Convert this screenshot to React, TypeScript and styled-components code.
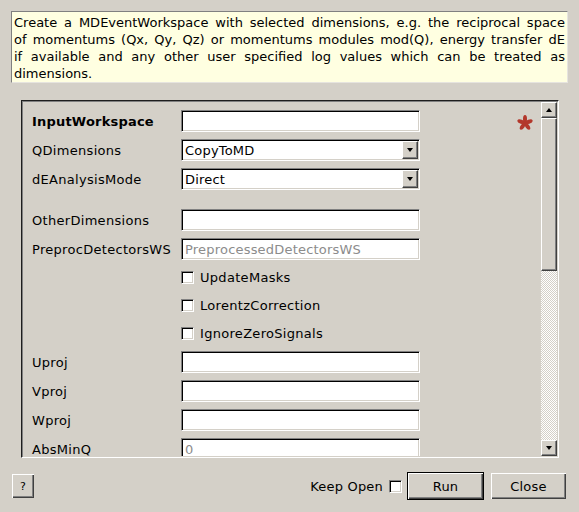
import React from 'react';
import styled, { createGlobalStyle } from 'styled-components';

const Global = createGlobalStyle`
  html, body { margin: 0; padding: 0; background: #d4d0c8; }
  body { font-family: "DejaVu Sans", "Noto Sans", sans-serif; font-size: 13px; color: #000; }
  * { box-sizing: border-box; }
`;

const Dialog = styled.div`
  width: 579px;
  height: 512px;
  display: flex;
  flex-direction: column;
  padding: 11px 11px 0 11px;
  background: #d4d0c8;
  overflow: hidden;
`;

const Description = styled.div`
  height: 72px;
  background: #ffffe1;
  border: 1px solid;
  border-color: #808080 #e6e4df #e6e4df #808080;
  padding: 2px 2px 0 2px;
  line-height: 17px;
`;

const DescLine = styled.div<{ $last?: boolean }>`
  text-align: ${p => (p.$last ? 'left' : 'justify')};
  text-align-last: ${p => (p.$last ? 'left' : 'justify')};
  white-space: normal;
  height: 17px;
  overflow: hidden;
`;

const Frame = styled.div`
  margin: 17px 0 0 10px;
  width: 538px;
  height: 358px;
  display: flex;
  border: 1px solid;
  border-color: #1e1e1e #ffffff #ffffff #1e1e1e;
  padding: 1px;
  box-shadow: inset 1px 1px 0 #808080;
`;

const Viewport = styled.div`
  flex: 1;
  overflow: hidden;
  position: relative;
`;

const Form = styled.div`
  display: flex;
  flex-direction: column;
  gap: 7px;
  padding: 8px 0 0 9px;
`;

const Row = styled.div<{ $h?: number }>`
  display: grid;
  grid-template-columns: 149px 239px 1fr;
  align-items: center;
  height: ${p => p.$h ?? 22}px;
  flex-shrink: 0;
`;

const Spacer = styled.div`
  height: 5px;
  flex-shrink: 0;
`;

const Label = styled.div<{ $bold?: boolean }>`
  font-weight: ${p => (p.$bold ? 'bold' : 'normal')};
  white-space: nowrap;
  letter-spacing: ${p => (p.$bold ? '0.2px' : '0.3px')};
`;

const Field = styled.div<{ $disabled?: boolean }>`
  height: 22px;
  width: 239px;
  background: #ffffff;
  border: 1px solid;
  border-color: #808080 #ffffff #ffffff #808080;
  box-shadow: inset 1px 1px 0 #000000, inset -1px -1px 0 #d4d0c8;
  padding: 0 3px;
  display: flex;
  align-items: center;
  color: ${p => (p.$disabled ? '#8c8c8c' : '#000')};
  white-space: nowrap;
  overflow: hidden;
  letter-spacing: 0.2px;
`;

const Combo = styled(Field)`
  padding: 1px 1px 1px 3px;
  justify-content: space-between;
  align-items: stretch;
`;

const ComboText = styled.span`
  display: flex;
  align-items: center;
`;

const RaisedBox = styled.div`
  background: #d4d0c8;
  border-top: 1px solid #ffffff;
  border-left: 1px solid #ffffff;
  border-right: 1px solid #404040;
  border-bottom: 1px solid #404040;
  box-shadow: inset -1px -1px 0 #808080;
  display: flex;
  align-items: center;
  justify-content: center;
`;

const ComboButton = styled(RaisedBox)`
  width: 16px;
  height: 18px;
`;

const Arrow = styled.span<{ $up?: boolean }>`
  width: 0;
  height: 0;
  border-left: 3.5px solid transparent;
  border-right: 3.5px solid transparent;
  ${p => (p.$up ? 'border-bottom: 4px solid #000;' : 'border-top: 4px solid #000;')}
`;

const CheckCell = styled.label`
  grid-column: 2 / 4;
  display: flex;
  align-items: center;
  gap: 6px;
  letter-spacing: 0.3px;
`;

const CheckBox = styled.span`
  width: 13px;
  height: 13px;
  background: #fff;
  border: 1px solid;
  border-color: #808080 #ffffff #ffffff #808080;
  box-shadow: inset 1px 1px 0 #000, inset -1px -1px 0 #d4d0c8;
  flex-shrink: 0;
`;

const StarCell = styled.div`
  justify-self: end;
  padding-right: 8px;
  display: flex;
  align-items: center;
  margin-top: 2px;
`;

const ScrollBar = styled.div`
  width: 16px;
  display: flex;
  flex-direction: column;
  background-color: #ffffff;
  background-image: repeating-conic-gradient(#d4d0c8 0 25%, #ffffff 0 50%);
  background-size: 2px 2px;
`;

const ScrollButton = styled(RaisedBox)`
  height: 16px;
  flex-shrink: 0;
`;

const Thumb = styled(RaisedBox)`
  height: 153px;
  flex-shrink: 0;
`;

const Trough = styled.div`
  flex: 1;
`;

const BottomBar = styled.div`
  margin-top: 14px;
  height: 28px;
  display: flex;
  align-items: center;
  padding-right: 2px;
  padding-left: 1px;
`;

const Button = styled.button<{ $w: number; $h: number; $default?: boolean }>`
  width: ${p => p.$w}px;
  height: ${p => p.$h}px;
  font-family: "DejaVu Sans", sans-serif;
  font-size: 13px;
  color: #000;
  background: #d4d0c8;
  padding: 0;
  border: ${p => (p.$default ? '1px solid #000' : 'none')};
  box-shadow: inset 1px 1px 0 #ffffff, inset -1px -1px 0 #404040, inset -2px -2px 0 #808080;
  display: flex;
  align-items: center;
  justify-content: center;
  letter-spacing: 0.2px;
`;

const HelpText = styled.span`
  font-size: 11px;
`;

const Grow = styled.div`
  flex: 1;
`;

const KeepOpen = styled.label`
  display: flex;
  align-items: center;
  gap: 6px;
  margin-right: 5px;
  letter-spacing: 0.2px;
`;

const ButtonGap = styled.div`
  width: 7px;
`;

const Star = () => (
  <svg width="16" height="15" viewBox="0 0 16 15">
    {[0, 72, 144, 216, 288].map(a => (
      <ellipse key={a} cx="8" cy="4" rx="2" ry="4" fill="#b3372b" transform={`rotate(${a} 8 8)`} />
    ))}
  </svg>
);

type FieldRow = { label: string; kind: 'text' | 'combo' | 'disabled'; value?: string; bold?: boolean; star?: boolean };

const TextRow = ({ r }: { r: FieldRow }) => (
  <Row>
    <Label $bold={r.bold}>{r.label}</Label>
    {r.kind === 'combo' ? (
      <Combo>
        <ComboText>{r.value}</ComboText>
        <ComboButton>
          <Arrow />
        </ComboButton>
      </Combo>
    ) : (
      <Field $disabled={r.kind === 'disabled'}>{r.value}</Field>
    )}
    {r.star ? (
      <StarCell>
        <Star />
      </StarCell>
    ) : (
      <div />
    )}
  </Row>
);

const CheckRow = ({ label }: { label: string }) => (
  <Row $h={21}>
    <div />
    <CheckCell>
      <CheckBox />
      {label}
    </CheckCell>
  </Row>
);

export default function App() {
  return (
    <>
      <Global />
      <Dialog>
        <Description>
          <DescLine>Create a MDEventWorkspace with selected dimensions, e.g. the reciprocal space</DescLine>
          <DescLine>of momentums (Qx, Qy, Qz) or momentums modules mod(Q), energy transfer dE</DescLine>
          <DescLine>if available and any other user specified log values which can be treated as</DescLine>
          <DescLine $last>dimensions.</DescLine>
        </Description>
        <Frame>
          <Viewport>
            <Form>
              <TextRow r={{ label: 'InputWorkspace', kind: 'text', bold: true, star: true }} />
              <TextRow r={{ label: 'QDimensions', kind: 'combo', value: 'CopyToMD' }} />
              <TextRow r={{ label: 'dEAnalysisMode', kind: 'combo', value: 'Direct' }} />
              <Spacer />
              <TextRow r={{ label: 'OtherDimensions', kind: 'text' }} />
              <TextRow r={{ label: 'PreprocDetectorsWS', kind: 'disabled', value: 'PreprocessedDetectorsWS' }} />
              <CheckRow label="UpdateMasks" />
              <CheckRow label="LorentzCorrection" />
              <CheckRow label="IgnoreZeroSignals" />
              <TextRow r={{ label: 'Uproj', kind: 'text' }} />
              <TextRow r={{ label: 'Vproj', kind: 'text' }} />
              <TextRow r={{ label: 'Wproj', kind: 'text' }} />
              <TextRow r={{ label: 'AbsMinQ', kind: 'disabled', value: '0' }} />
            </Form>
          </Viewport>
          <ScrollBar>
            <ScrollButton>
              <Arrow $up />
            </ScrollButton>
            <Thumb />
            <Trough />
            <ScrollButton>
              <Arrow />
            </ScrollButton>
          </ScrollBar>
        </Frame>
        <BottomBar>
          <Button $w={22} $h={24}>
            <HelpText>?</HelpText>
          </Button>
          <Grow />
          <KeepOpen>
            Keep Open
            <CheckBox />
          </KeepOpen>
          <Button $w={77} $h={28} $default>
            Run
          </Button>
          <ButtonGap />
          <Button $w={75} $h={26}>
            Close
          </Button>
        </BottomBar>
      </Dialog>
    </>
  );
}
